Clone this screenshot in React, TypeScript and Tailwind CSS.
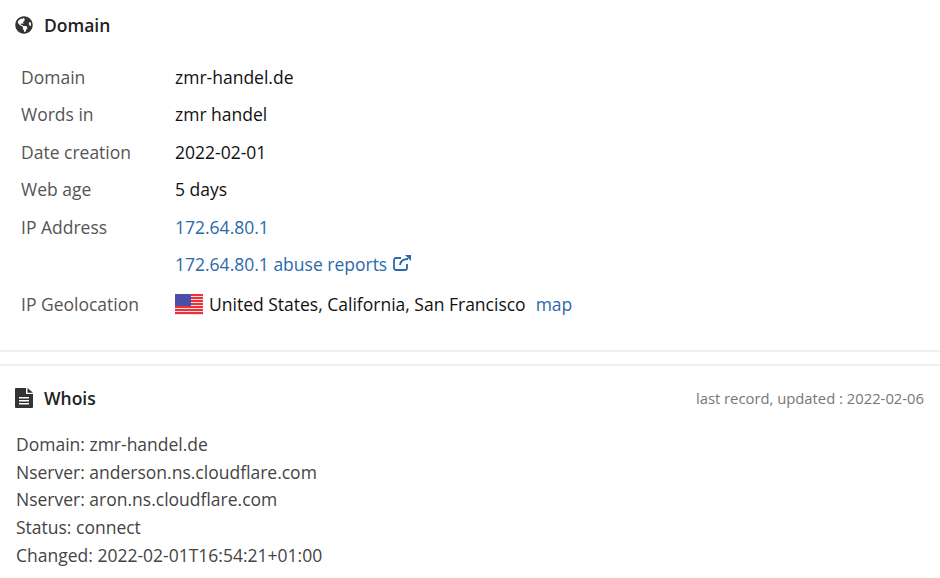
import React from 'react';
import { FaGlobeAmericas } from 'react-icons/fa';

// Plain label + value row
const Row = ({ label, children, className = 'h-[37.5px]' }: { label?: string; children: React.ReactNode; className?: string }) => (
  <div className={`flex items-center ${className}`}>
    <div className="w-[154px] text-[#555]">{label}</div>
    <div className="flex items-center text-[#111]">{children}</div>
  </div>
);

const UsFlag = () => (
  <svg width="28" height="21" viewBox="0 0 28 21" className="mr-[6px] shrink-0">
    <rect width="28" height="21" fill="#fbdcdc" />
    {[0, 3, 6, 9, 12, 15, 18].map((y) => (
      <rect key={y} y={y} width="28" height="2" fill="#e8333f" />
    ))}
    <rect width="16" height="12" fill="#4a4fa8" />
  </svg>
);

const FileIcon = () => (
  <svg width="18" height="20" viewBox="0 0 18 20" className="mr-[11px] shrink-0">
    <path
      fillRule="evenodd"
      fill="#333"
      d="M0 1a1 1 0 0 1 1-1h10v6h7v13a1 1 0 0 1-1 1H1a1 1 0 0 1-1-1zM4 9v1.5h10V9zM4 12v1.500h10V12zM4 15v1.500h10V15z"
    />
    <path fill="#333" d="M12.500 0 18 4.800h-5.500z" />
  </svg>
);

const App = () => {
  return (
    <div className="w-[940px] h-[578px] overflow-hidden bg-white font-['Open_Sans',sans-serif] text-[17.5px]">
      {/* Domain section */}
      <div className="h-[352px] border-b-2 border-[#eee] pt-[14px] pl-[15px]">
        <div className="flex items-center h-[22px]">
          <FaGlobeAmericas className="text-[#333] text-[18px] mr-[11px]" />
          <span className="font-semibold text-[#222]">Domain</span>
        </div>
        <div className="mt-[22px] pl-[6px]">
          <Row label="Domain">zmr-handel.de</Row>
          <Row label="Words in">zmr handel</Row>
          <Row label="Date creation">2022-02-01</Row>
          <Row label="Web age">5 days</Row>
          <Row label="IP Address"><span className="text-[#2a69ac]">172.64.80.1</span></Row>
          <Row>
            <span className="text-[#2a69ac]">172.64.80.1 abuse reports</span>
            <svg width="19" height="17" viewBox="0 0 19 17" fill="none" stroke="#2a69ac" strokeWidth="1.8" className="ml-[6px] mb-[3px]">
              <path d="M14 10v4a2 2 0 0 1-2 2H3a2 2 0 0 1-2-2V6a2 2 0 0 1 2-2h5" />
              <path d="M7 11c.5-4 3-6 8-6" />
              <path d="M12 1h6v6z" fill="#2a69ac" stroke="none" />
            </svg>
          </Row>
          <Row label="IP Geolocation" className="h-[41px] pt-[1px]">
            <UsFlag />
            <span>United States, California, San Francisco</span>
            <span className="text-[#2a69ac] ml-[10px]">map</span>
          </Row>
        </div>
      </div>

      {/* Whois section */}
      <div className="mt-[12px] border-t-2 border-[#eee] pt-[21px] px-[15px]">
        <div className="flex items-center justify-between h-[22px] pr-px">
          <div className="flex items-center">
            <FileIcon />
            <span className="font-semibold text-[#222]">Whois</span>
          </div>
          <span className="text-[14.8px] text-[#777]">last record, updated : 2022-02-06</span>
        </div>
        <div className="mt-[22px] pl-px text-[#444] leading-[27.7px]">
          <div>Domain: zmr-handel.de</div>
          <div>Nserver: anderson.ns.cloudflare.com</div>
          <div>Nserver: aron.ns.cloudflare.com</div>
          <div>Status: connect</div>
          <div>Changed: 2022-02-01T16:54:21+01:00</div>
        </div>
      </div>
    </div>
  );
};

export default App;
